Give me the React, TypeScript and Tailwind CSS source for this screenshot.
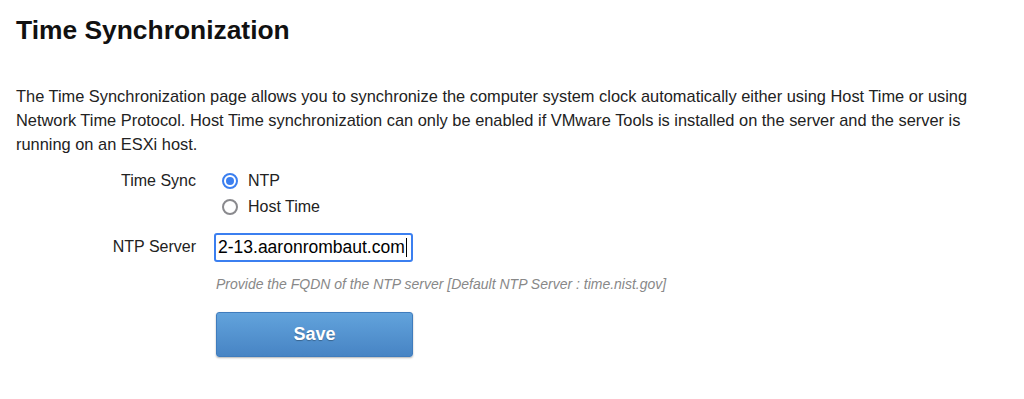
import React from "react";

export default function App() {
  return (
    <div className="w-[1024px] h-[399px] bg-white text-[#222] overflow-hidden" style={{ fontFamily: '"Liberation Sans", Arial, sans-serif' }}>
      <div className="px-4 pt-[14px]">
        <h1 className="text-[26.4px] leading-[32px] font-bold text-[#111]">Time Synchronization</h1>
        <p className="mt-[38px] text-[16.4px] leading-[24px] pr-6">
          The Time Synchronization page allows you to synchronize the computer system clock automatically either using Host Time or using Network Time Protocol. Host Time synchronization can only be enabled if VMware Tools is installed on the server and the server is running on an ESXi host.
        </p>
        <div className="mt-[15px] flex">
          <div className="w-[180px] text-right text-[16px] leading-[20px]">Time Sync</div>
          <div className="ml-[26px] flex flex-col gap-[6px]">
            <label className="flex items-center gap-[10px] text-[16px] leading-[20px]">
              <span className="w-[16px] h-[16px] rounded-full border-[2px] border-[#3b7ff0] flex items-center justify-center">
                <span className="w-[8px] h-[8px] rounded-full bg-[#3b7ff0]" />
              </span>
              NTP
            </label>
            <label className="flex items-center gap-[10px] text-[16px] leading-[20px]">
              <span className="w-[16px] h-[16px] rounded-full border-[2px] border-[#8a8a8e]" />
              Host Time
            </label>
          </div>
        </div>
        <div className="mt-[16px] flex">
          <div className="w-[180px] text-right text-[16px] leading-[20px] pt-[4px]">NTP Server</div>
          <div className="ml-[18px] flex flex-col">
            <div className="w-[199px] h-[29px] border-[2px] border-[#3b7ff0] rounded-[3px] flex items-center px-[2px] text-[17.5px] text-black">
              <span>2-13.aaronrombaut.com</span>
              <span className="w-[1px] h-[19px] bg-black ml-[1px]" />
            </div>
            <div className="mt-[14px] ml-[2px] text-[14px] italic text-[#888] leading-[16px] whitespace-nowrap">
              Provide the FQDN of the NTP server [Default NTP Server : time.nist.gov]
            </div>
            <button className="mt-[20px] ml-[2px] w-[197px] h-[45px] rounded-[3px] border border-[#3f7cbd] bg-gradient-to-b from-[#62a3dc] to-[#4784c4] text-white font-bold text-[18px] shadow-[0_1px_2px_rgba(0,0,0,0.3)]" style={{ textShadow: "0 1px 1px rgba(0,0,0,0.3)" }}>
              Save
            </button>
          </div>
        </div>
      </div>
    </div>
  );
}
